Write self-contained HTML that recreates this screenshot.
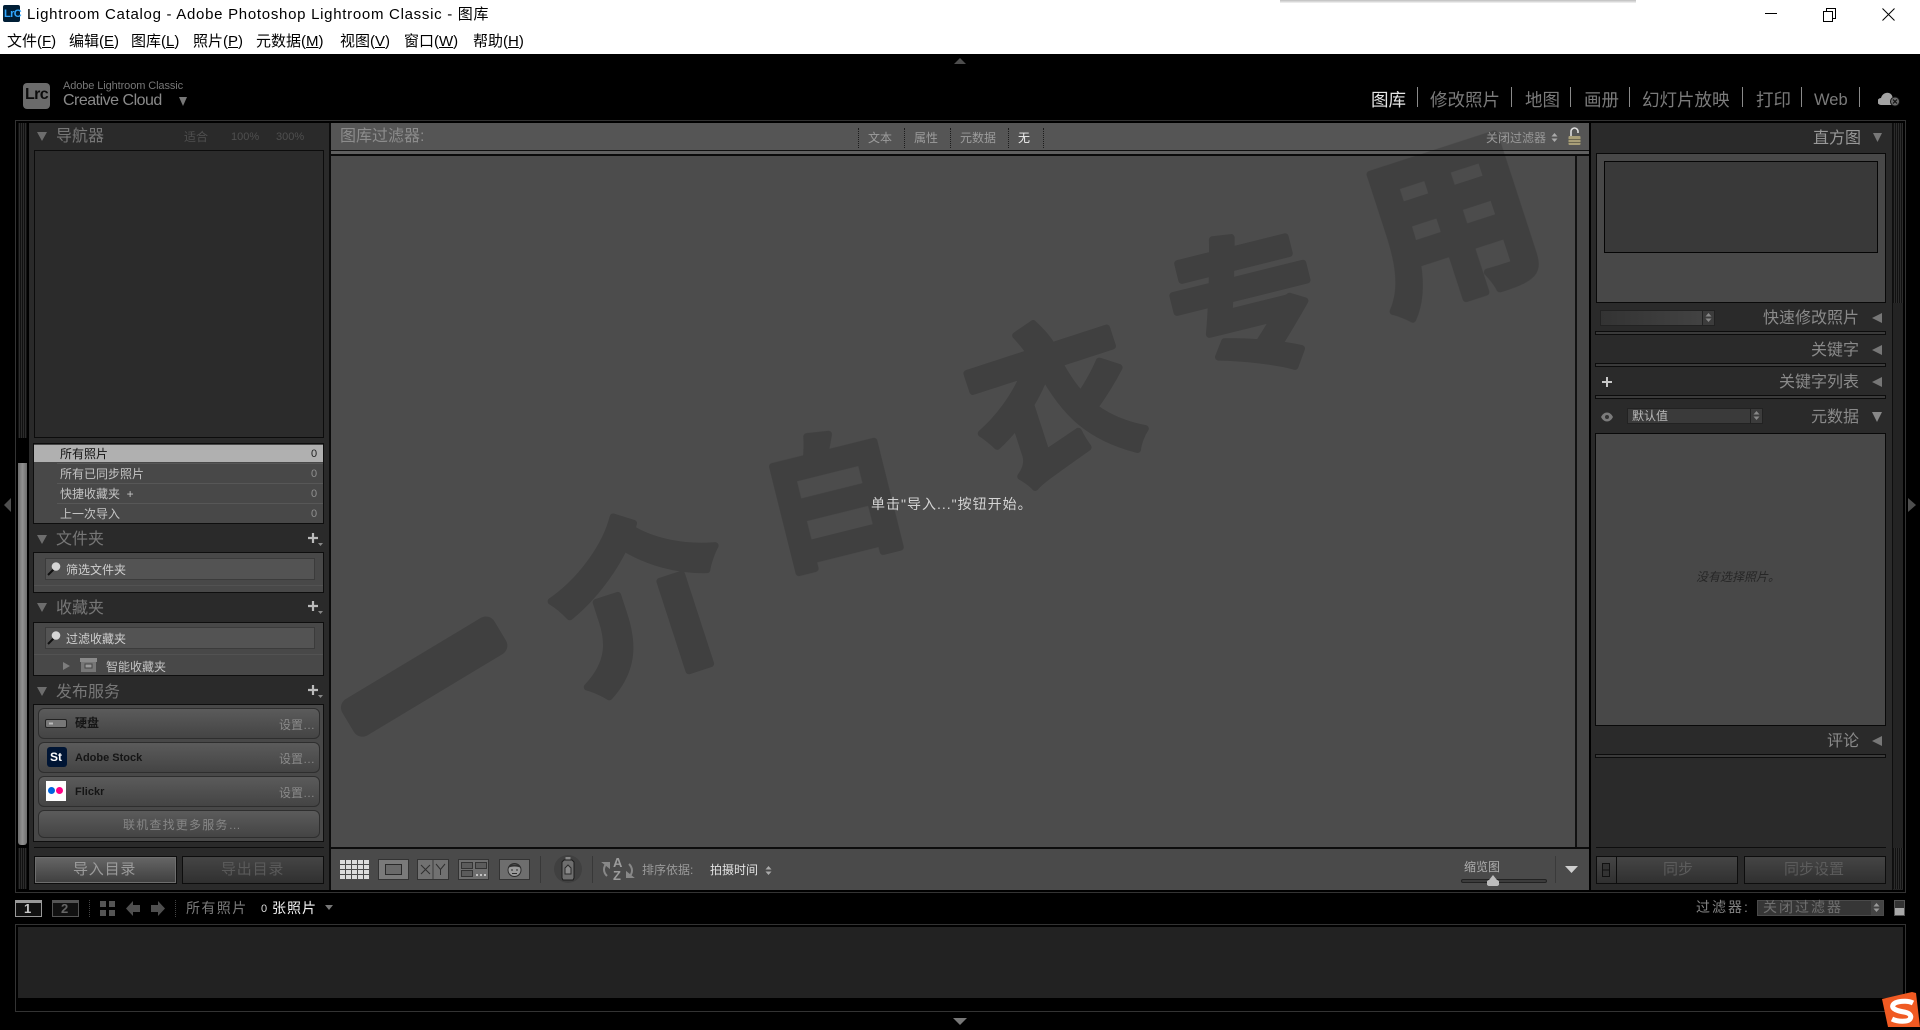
<!DOCTYPE html>
<html lang="zh-CN">
<head>
<meta charset="utf-8">
<title>Lightroom Catalog - Adobe Photoshop Lightroom Classic - 图库</title>
<style>
html,body{margin:0;padding:0;background:#000;}
#r{position:relative;width:1920px;height:1030px;overflow:hidden;background:#000;font-family:"Liberation Sans","Noto Sans CJK SC",sans-serif;}
#r div,#r span.t,#r svg{position:absolute;}
.t{position:absolute;white-space:nowrap;line-height:20px;height:20px;font-size:12px;}
.w{color:#000;font-size:15px;}
.h{font-size:16px;color:#777;}
.nav{font-size:17.5px;color:#7b7b7b;top:90px;}
.sep{width:1px;height:20px;top:87px;background:#8a8a8a;}
.box{background:#484848;border:1px solid #0e0e0e;box-sizing:border-box;}
.sf{background:#535353;border:1px solid #3b3b3b;box-sizing:border-box;}
.pb{left:38px;width:282px;box-sizing:border-box;border:1px solid #2e2e2e;border-radius:6px;background:linear-gradient(#5b5b5b,#444);}
.rs{left:1595px;width:291px;height:4px;box-sizing:border-box;border:1px solid #0c0c0c;background:#3a3a3a;}
.btn{box-sizing:border-box;border:1px solid #0d0d0d;height:28px;top:856px;}
.grip{background:repeating-linear-gradient(90deg,#111 0 1px,#2c2c2c 1px 2px);}
.rowl{left:57px;width:266px;height:1px;background:#575757;}
.c0{left:308px;width:12px;text-align:center;color:#8f8f8f;font-size:11px;}
.dot{width:1px;border-left:1px dotted #1c1c1c;}
</style>
</head>
<body>
<div id="r">
<!-- title bar -->
<div style="left:0;top:0;width:1920px;height:54px;background:#fff"></div>
<div style="left:1280px;top:0;width:356px;height:3px;background:linear-gradient(#bdbdbd,#f4f4f4)"></div>
<div style="left:3px;top:5px;width:17px;height:17px;background:#001e36;border-radius:2px"></div>
<span class="t" style="left:4px;top:4px;color:#31a8ff;font-size:11px;font-weight:700;letter-spacing:-.6px">LrC</span>
<span class="t w" style="left:27px;top:5px;font-size:15px;letter-spacing:.71px">Lightroom Catalog - Adobe Photoshop Lightroom Classic - 图库</span>
<span class="t w" style="left:7px;top:32px;font-size:15px">文件(<u>F</u>)</span>
<span class="t w" style="left:69px;top:32px;font-size:15px">编辑(<u>E</u>)</span>
<span class="t w" style="left:131px;top:32px;font-size:15px">图库(<u>L</u>)</span>
<span class="t w" style="left:193px;top:32px;font-size:15px">照片(<u>P</u>)</span>
<span class="t w" style="left:256px;top:32px;font-size:15px">元数据(<u>M</u>)</span>
<span class="t w" style="left:340px;top:32px;font-size:15px">视图(<u>V</u>)</span>
<span class="t w" style="left:404px;top:32px;font-size:15px">窗口(<u>W</u>)</span>
<span class="t w" style="left:473px;top:32px;font-size:15px">帮助(<u>H</u>)</span>
<svg style="left:1760px;top:4px" width="140" height="20" viewBox="0 0 140 20" fill="none" stroke="#000" stroke-width="1">
<path d="M5 9.5H17"/><path d="M63.5 7.5h9v10h-9zM66.5 7.5v-3h9v10h-3"/><path d="M122.5 4.5l12 12M134.5 4.5l-12 12"/>
</svg>

<!-- top & bottom collapse arrows -->
<svg style="left:953px;top:57px" width="14" height="8"><path d="M1 7L7 1l6 6z" fill="#4d4d4d"/></svg>
<svg style="left:952px;top:1017px" width="16" height="9"><path d="M1 1h14L8 8z" fill="#777"/></svg>
<svg style="left:4px;top:498px" width="8" height="14"><path d="M7 0v14L0 7z" fill="#4e4e4e"/></svg>
<svg style="left:1908px;top:498px" width="8" height="14"><path d="M0 0v14l8-7z" fill="#4e4e4e"/></svg>

<!-- identity plate -->
<div style="left:23px;top:83px;width:27px;height:26px;background:#6b6b6b;border-radius:4px"></div>
<span class="t" style="left:25px;top:85px;font-size:16px;font-weight:700;color:#0c0c0c;letter-spacing:-.6px">Lrc</span>
<span class="t" style="left:63px;top:76px;font-size:11px;color:#777;letter-spacing:-.1px">Adobe Lightroom Classic</span>
<span class="t" style="left:63px;top:91px;font-size:16px;color:#8a8a8a;letter-spacing:-.5px">Creative Cloud</span>
<svg style="left:179px;top:97px" width="9" height="10"><path d="M0 0h8L4 9z" fill="#777"/></svg>

<!-- module picker -->
<span class="t nav" style="left:1371px;color:#e6e6e6">图库</span><div class="sep" style="left:1417px"></div>
<span class="t nav" style="left:1430px">修改照片</span><div class="sep" style="left:1511px"></div>
<span class="t nav" style="left:1525px">地图</span><div class="sep" style="left:1570px"></div>
<span class="t nav" style="left:1584px">画册</span><div class="sep" style="left:1629px"></div>
<span class="t nav" style="left:1642px">幻灯片放映</span><div class="sep" style="left:1742px"></div>
<span class="t nav" style="left:1756px">打印</span><div class="sep" style="left:1801px"></div>
<span class="t nav" style="left:1814px;font-size:16.5px">Web</span><div class="sep" style="left:1859px"></div>
<svg style="left:1878px;top:90px" width="24" height="17" viewBox="0 0 24 17">
<path d="M3 15a3.5 3.5 0 0 1 0-7c1-4 5-6 8-5 2 .7 3 2 3.500 4 3 0 5 2 5 4l-3 4z" fill="#a3a3a3"/>
<circle cx="17" cy="11.500" r="4.500" fill="#6b6b6b" stroke="#111"/><path d="M15 9.500l4 4M19 9.500l-4 4" stroke="#111" stroke-width="1.200"/>
</svg>

<!-- main frame -->
<div style="left:15px;top:120px;width:1891px;height:773px;box-sizing:border-box;border:1px solid #333"></div>

<!-- left panel -->
<div style="left:29px;top:123px;width:300px;height:767px;background:#2a2a2a"></div>
<div style="left:18px;top:123px;width:9px;height:315px" class="grip"></div>
<div style="left:18px;top:463px;width:9px;height:382px;background:linear-gradient(90deg,#6e6e6e,#929292 50%,#6e6e6e);border-radius:0 0 3px 3px"></div>
<div style="left:18px;top:848px;width:9px;height:41px" class="grip"></div>
<div style="left:329px;top:123px;width:2px;height:767px;background:#0c0c0c"></div>

<!-- center panel -->
<div style="left:331px;top:123px;width:1258px;height:27px;background:#555"></div>
<div style="left:331px;top:150px;width:1258px;height:1px;background:#111"></div>
<div style="left:331px;top:151px;width:1258px;height:3px;background:#606060"></div>
<div style="left:331px;top:154px;width:1258px;height:2px;background:#0b0b0b"></div>
<div style="left:331px;top:156px;width:1244px;height:691px;background:#4c4c4c"></div>
<div style="left:1575px;top:156px;width:2px;height:691px;background:#111"></div>
<div style="left:1577px;top:156px;width:12px;height:691px;background:#464646"></div>
<div style="left:331px;top:847px;width:1258px;height:2px;background:#0c0c0c"></div>
<div style="left:331px;top:849px;width:1258px;height:41px;background:#4a4a4a"></div>

<!-- watermark -->
<svg style="left:0;top:0" width="1920" height="1030" viewBox="0 0 1920 1030" font-family="'Noto Sans CJK SC',sans-serif" font-weight="700" text-anchor="middle" dominant-baseline="central">
<defs><clipPath id="cp"><rect x="331" y="123" width="1244" height="724"/></clipPath></defs>
<g clip-path="url(#cp)" opacity=".16" fill="#000" stroke="#000" stroke-width="7" stroke-linejoin="round">
<text x="420" y="670" font-size="170" transform="rotate(-31 420 670)" stroke-width="20">一</text>
<text x="638" y="590" font-size="178" transform="rotate(-18 638 590)">介</text>
<text x="832" y="490" font-size="138" transform="rotate(-14 832 490)">白</text>
<text x="1050" y="392" font-size="165" transform="rotate(-18 1050 392)">衣</text>
<text x="1243" y="298" font-size="150" transform="rotate(-14 1243 298)">专</text>
<text x="1447" y="212" font-size="172" transform="rotate(-18 1447 212)">用</text>
</g>
</svg>

<!-- navigator -->
<svg style="left:37px;top:132px" width="11" height="10"><path d="M0 0h10L5 9z" fill="#6d6d6d"/></svg>
<span class="t h" style="left:56px;top:127px">导航器</span>
<span class="t" style="left:184px;top:127px;color:#4f4f4f">适合</span>
<span class="t" style="left:231px;top:127px;color:#4f4f4f;font-size:11px">100%</span>
<span class="t" style="left:276px;top:127px;color:#4f4f4f;font-size:11px">300%</span>
<div style="left:34px;top:150px;width:290px;height:288px;box-sizing:border-box;border:1px solid #0c0c0c;background:#2b2b2b"></div>

<!-- catalog -->
<div class="box" style="left:33px;top:443px;width:291px;height:81px"></div>
<div style="left:34px;top:445px;width:289px;height:17px;background:#b0b0b0"></div>
<div class="rowl" style="top:463px"></div><div class="rowl" style="top:483px"></div><div class="rowl" style="top:503px"></div>
<span class="t" style="left:60px;top:444px;color:#111">所有照片</span><span class="t c0" style="top:444px;color:#222">0</span>
<span class="t" style="left:60px;top:464px;color:#c4c4c4">所有已同步照片</span><span class="t c0" style="top:464px">0</span>
<span class="t" style="left:60px;top:484px;color:#c4c4c4">快捷收藏夹 &nbsp;+</span><span class="t c0" style="top:484px">0</span>
<span class="t" style="left:60px;top:504px;color:#c4c4c4">上一次导入</span><span class="t c0" style="top:504px">0</span>

<!-- folders -->
<svg style="left:37px;top:535px" width="11" height="10"><path d="M0 0h10L5 9z" fill="#6d6d6d"/></svg>
<span class="t h" style="left:56px;top:530px">文件夹</span>
<svg style="left:306px;top:532px" width="18" height="16"><path d="M7 1v10M2 6h10" stroke="#bbb" stroke-width="2.200"/><path d="M12 11h5l-2.500 3z" fill="#888"/></svg>
<div class="box" style="left:33px;top:552px;width:291px;height:41px"></div>
<div class="sf" style="left:45px;top:558px;width:270px;height:22px"></div>
<div style="left:34px;top:585px;width:289px;height:1px;background:#525252"></div>
<svg style="left:46px;top:561px" width="18" height="16"><path d="M2 14l6-6" stroke="#111" stroke-width="2"/><circle cx="10" cy="5.500" r="4.300" fill="#d6d6d6"/></svg>
<span class="t" style="left:66px;top:560px;color:#cfcfcf">筛选文件夹</span>

<!-- collections -->
<svg style="left:37px;top:603px" width="11" height="10"><path d="M0 0h10L5 9z" fill="#6d6d6d"/></svg>
<span class="t h" style="left:56px;top:599px">收藏夹</span>
<svg style="left:306px;top:600px" width="18" height="16"><path d="M7 1v10M2 6h10" stroke="#bbb" stroke-width="2.200"/><path d="M12 11h5l-2.500 3z" fill="#888"/></svg>
<div class="box" style="left:33px;top:622px;width:291px;height:54px"></div>
<div class="sf" style="left:45px;top:627px;width:270px;height:22px"></div>
<div style="left:34px;top:654px;width:289px;height:1px;background:#525252"></div>
<svg style="left:46px;top:630px" width="18" height="16"><path d="M2 14l6-6" stroke="#111" stroke-width="2"/><circle cx="10" cy="5.500" r="4.300" fill="#d6d6d6"/></svg>
<span class="t" style="left:66px;top:629px;color:#cfcfcf">过滤收藏夹</span>
<svg style="left:62px;top:661px" width="9" height="10"><path d="M1 1v8l7-4z" fill="#7d7d7d"/></svg>
<svg style="left:80px;top:658px" width="17" height="14"><rect x="0" y="0" width="17" height="4" fill="#8a8a8a"/><rect x="1" y="4" width="15" height="10" fill="#777"/><rect x="5" y="6" width="7" height="4" fill="#9a9a9a" stroke="#444"/></svg>
<span class="t" style="left:106px;top:657px;color:#c4c4c4">智能收藏夹</span>

<!-- publish services -->
<svg style="left:37px;top:687px" width="11" height="10"><path d="M0 0h10L5 9z" fill="#6d6d6d"/></svg>
<span class="t h" style="left:56px;top:683px">发布服务</span>
<svg style="left:306px;top:684px" width="18" height="16"><path d="M7 1v10M2 6h10" stroke="#bbb" stroke-width="2.200"/><path d="M12 11h5l-2.500 3z" fill="#888"/></svg>
<div class="box" style="left:33px;top:704px;width:291px;height:138px"></div>
<div class="pb" style="top:708px;height:31px"></div>
<div class="pb" style="top:742px;height:31px"></div>
<div class="pb" style="top:776px;height:31px"></div>
<div class="pb" style="top:810px;height:28px"></div>
<svg style="left:45px;top:719px" width="22" height="10"><rect x=".5" y=".5" width="21" height="8" rx="1.500" fill="#777" stroke="#222"/><rect x="4" y="3.500" width="4" height="2" fill="#bbb"/></svg>
<span class="t" style="left:75px;top:713px;color:#151515;font-weight:700">硬盘</span>
<span class="t" style="left:279px;top:715px;color:#8a8a8a">设置…</span>
<div style="left:47px;top:747px;width:20px;height:20px;background:#001534;border-radius:3px"></div>
<span class="t" style="left:50px;top:747px;color:#fff;font-weight:700;font-size:12px">St</span>
<span class="t" style="left:75px;top:748px;color:#151515;font-size:11px;font-weight:700">Adobe Stock</span>
<span class="t" style="left:279px;top:749px;color:#8a8a8a">设置…</span>
<div style="left:46px;top:781px;width:20px;height:20px;background:#fff"></div>
<div style="left:48px;top:787px;width:7px;height:7px;border-radius:50%;background:#0063dc"></div>
<div style="left:56px;top:787px;width:7px;height:7px;border-radius:50%;background:#ff0084"></div>
<span class="t" style="left:75px;top:782px;color:#151515;font-size:11px;font-weight:700">Flickr</span>
<span class="t" style="left:279px;top:783px;color:#8a8a8a">设置…</span>
<span class="t" style="left:123px;top:815px;color:#868686;letter-spacing:1.200px">联机查找更多服务…</span>

<!-- left bottom buttons -->
<div style="left:34px;top:847px;width:290px;height:1px;background:#0d0d0d"></div>
<div class="btn" style="left:34px;width:143px;background:linear-gradient(#666,#3f3f3f);box-shadow:inset 0 0 0 1px #6e6e6e"></div>
<span class="t" style="left:73px;top:860px;font-size:15px;color:#9b9b9b;letter-spacing:.8px">导入目录</span>
<div class="btn" style="left:182px;width:142px;background:linear-gradient(#454545,#303030)"></div>
<span class="t" style="left:221px;top:860px;font-size:15px;color:#5a5a5a;letter-spacing:.8px">导出目录</span>

<!-- filter bar -->
<span class="t h" style="left:340px;top:127px;color:#8c8c8c">图库过滤器:</span>
<div class="dot" style="left:858px;top:128px;height:20px"></div>
<div class="dot" style="left:904px;top:128px;height:20px"></div>
<div class="dot" style="left:950px;top:128px;height:20px"></div>
<div class="dot" style="left:1008px;top:128px;height:20px"></div>
<div class="dot" style="left:1043px;top:128px;height:20px"></div>
<span class="t" style="left:868px;top:128px;color:#9c9c9c">文本</span>
<span class="t" style="left:914px;top:128px;color:#9c9c9c">属性</span>
<span class="t" style="left:960px;top:128px;color:#9c9c9c">元数据</span>
<span class="t" style="left:1018px;top:128px;color:#f0f0f0">无</span>
<span class="t" style="left:1486px;top:128px;color:#999">关闭过滤器</span>
<svg style="left:1551px;top:132px" width="7" height="11"><path d="M.5 4.500h6L3.500 1zM.5 6.500h6L3.500 10z" fill="#aaa"/></svg>
<svg style="left:1567px;top:127px" width="15" height="20"><path d="M4 9V4.500a3.500 3.500 0 0 1 7 0V6" fill="none" stroke="#ddd" stroke-width="1.600"/><rect x="1.500" y="9" width="12" height="9" rx="1" fill="#a89e78"/><rect x="1.500" y="12" width="12" height="1" fill="#6c6650"/><rect x="1.500" y="15" width="12" height="1" fill="#6c6650"/></svg>

<!-- message -->
<span class="t" style="left:871px;top:494px;font-size:14px;color:#d4d4d4;letter-spacing:1px">单击"导入..."按钮开始。</span>

<!-- toolbar -->
<svg style="left:340px;top:860px" width="30" height="20">
<defs><pattern id="g" width="6" height="5" patternUnits="userSpaceOnUse"><rect width="5" height="4" fill="#dcdcdc"/></pattern></defs>
<rect width="30" height="20" fill="url(#g)"/></svg>
<svg style="left:378px;top:859px" width="32" height="21"><rect x=".5" y=".5" width="30" height="20" fill="#7a7a7a" stroke="#333"/><rect x="7.500" y="5.500" width="16" height="10" fill="#6a6a6a" stroke="#2a2a2a"/></svg>
<svg style="left:417px;top:859px" width="33" height="21"><rect x=".5" y=".5" width="31" height="20" fill="#717171" stroke="#333"/><path d="M16 1v19" stroke="#3c3c3c"/><path d="M4 6l9 9M13 6l-9 9M19 5l4.500 5.500L28 5M23.500 10.500V16" stroke="#2f2f2f" fill="none"/></svg>
<svg style="left:458px;top:859px" width="32" height="21"><rect x=".5" y=".5" width="30" height="20" fill="#6e6e6e" stroke="#333"/><rect x="3.500" y="3.500" width="11" height="6" fill="#5b5b5b" stroke="#333"/><rect x="17.500" y="3.500" width="11" height="6" fill="#5b5b5b" stroke="#333"/><rect x="3.500" y="11.500" width="11" height="6" fill="#5b5b5b" stroke="#333"/><path d="M18 16h2M22 16h2M26 16h2" stroke="#ddd" stroke-width="1.500"/></svg>
<svg style="left:499px;top:859px" width="32" height="21"><rect x=".5" y=".5" width="30" height="20" fill="#6e6e6e" stroke="#333"/><circle cx="15.500" cy="11" r="6.500" fill="#9a9a9a" stroke="#2c2c2c"/><path d="M9 9c1-5 12-5 13 0-3-2-10-2-13 0z" fill="#2f2f2f"/><path d="M12 11h2M17 11h2M13 14.500h5" stroke="#2c2c2c"/></svg>
<div style="left:540px;top:856px;width:1px;height:27px;background:#383838"></div>
<svg style="left:553px;top:855px" width="30" height="28"><circle cx="15" cy="14" r="14" fill="#404040"/><rect x="12.500" y="2" width="5" height="3" fill="#888"/><path d="M9 7l2-2h8l2 2v16l-1 2H10l-1-2z" fill="#6e6e6e" stroke="#1d1d1d"/><path d="M15 10l3 3v6h-6v-6z" fill="#8a8a8a" stroke="#2a2a2a"/></svg>
<div style="left:592px;top:856px;width:1px;height:27px;background:#383838"></div>
<span class="t" style="left:613px;top:856px;font-size:13px;font-weight:700;color:#9c9c9c;line-height:13px">A</span>
<span class="t" style="left:613px;top:869px;font-size:13px;font-weight:700;color:#9c9c9c;line-height:13px">Z</span>
<svg style="left:601px;top:860px" width="34" height="20" fill="none" stroke="#888" stroke-width="2"><path d="M6 16C2 12 2 7 6 3"/><path d="M28 4c4 4 4 9 0 13"/><path d="M3 3h5v4z" fill="#888"/><path d="M31 17h-5v-4z" fill="#888"/></svg>
<span class="t" style="left:642px;top:860px;color:#9a9a9a;font-size:12px">排序依据:</span>
<span class="t" style="left:710px;top:860px;color:#e2e2e2">拍摄时间</span>
<svg style="left:765px;top:865px" width="7" height="11"><path d="M.5 4.500h6L3.500 1zM.5 6.500h6L3.500 10z" fill="#aaa"/></svg>
<span class="t" style="left:1464px;top:857px;color:#adadad">缩览图</span>
<div style="left:1461px;top:879px;width:86px;height:4px;border-radius:2px;background:#3c3c3c;border:1px solid #222;box-sizing:border-box"></div>
<svg style="left:1487px;top:875px" width="12" height="11"><path d="M6 0l4 5a3 3 0 0 1-1 6H3a3 3 0 0 1-1-6z" fill="#bcbcbc"/></svg>
<div style="left:1555px;top:856px;width:1px;height:27px;background:#3a3a3a"></div>
<svg style="left:1565px;top:866px" width="13" height="8"><path d="M0 0h13L6.500 7z" fill="#cfcfcf"/></svg>

<!-- right panel -->
<div style="left:1591px;top:123px;width:301px;height:767px;background:#2a2a2a"></div>
<div style="left:1892px;top:123px;width:1px;height:767px;background:#0e0e0e"></div>
<div style="left:1893px;top:123px;width:10px;height:767px;background:#232323"></div>
<div class="grip" style="left:1893px;top:123px;width:10px;height:180px"></div>
<div class="grip" style="left:1893px;top:848px;width:10px;height:41px"></div>
<span class="t h" style="right:59px;top:129px;font-size:16px;color:#999">直方图</span>
<svg style="left:1873px;top:133px" width="10" height="10"><path d="M0 0h9L4.500 9z" fill="#777"/></svg>
<div class="box" style="left:1596px;top:153px;width:290px;height:150px;border-color:#090909"></div>
<div style="left:1604px;top:161px;width:274px;height:92px;box-sizing:border-box;border:1px solid #050505;background:#393939"></div>

<div style="left:1600px;top:310px;width:115px;height:16px;background:linear-gradient(90deg,#333,#444);border:1px solid #222;box-sizing:border-box"></div>
<div style="left:1702px;top:310px;width:13px;height:16px;background:#3c3c3c;border:1px solid #222;box-sizing:border-box"></div>
<svg style="left:1705px;top:312px" width="7" height="11"><path d="M.5 4.500h6L3.500 1zM.5 6.500h6L3.500 10z" fill="#888"/></svg>
<span class="t h" style="right:61px;top:309px;color:#8a8a8a">快速修改照片</span>
<svg style="left:1872px;top:313px" width="11" height="10"><path d="M10 0v10L0 5z" fill="#777"/></svg>
<div class="rs" style="top:331px"></div>
<span class="t h" style="right:61px;top:341px;color:#8a8a8a">关键字</span>
<svg style="left:1872px;top:345px" width="11" height="10"><path d="M10 0v10L0 5z" fill="#777"/></svg>
<div class="rs" style="top:363px"></div>
<svg style="left:1602px;top:377px" width="10" height="10"><path d="M5 0v10M0 5h10" stroke="#c8c8c8" stroke-width="2"/></svg>
<span class="t h" style="right:61px;top:373px;color:#8a8a8a">关键字列表</span>
<svg style="left:1872px;top:377px" width="11" height="10"><path d="M10 0v10L0 5z" fill="#777"/></svg>
<div class="rs" style="top:395px"></div>
<svg style="left:1600px;top:411px" width="14" height="12"><path d="M1 6c3-6 9-6 12 0-3 6-9 6-12 0z" fill="#7b7b7b"/><circle cx="7" cy="6" r="2" fill="#333"/></svg>
<div style="left:1627px;top:408px;width:136px;height:16px;background:#3a3a3a;border:1px solid #222;box-sizing:border-box"></div>
<div style="left:1750px;top:408px;width:13px;height:16px;background:#3c3c3c;border:1px solid #222;box-sizing:border-box"></div>
<svg style="left:1753px;top:410px" width="7" height="11"><path d="M.5 4.500h6L3.500 1zM.5 6.500h6L3.500 10z" fill="#888"/></svg>
<span class="t" style="left:1632px;top:406px;color:#bbb">默认值</span>
<span class="t h" style="right:61px;top:408px;color:#8a8a8a">元数据</span>
<svg style="left:1872px;top:412px" width="11" height="10"><path d="M0 0h10L5 10z" fill="#888"/></svg>
<div class="box" style="left:1595px;top:433px;width:291px;height:293px;border-color:#090909"></div>
<span class="t" style="left:1696px;top:567px;color:#262626;font-size:12px;font-style:italic">没有选择照片。</span>
<span class="t h" style="right:61px;top:732px;color:#8a8a8a">评论</span>
<svg style="left:1872px;top:736px" width="11" height="10"><path d="M10 0v10L0 5z" fill="#777"/></svg>
<div class="rs" style="top:754px"></div>
<div style="left:1596px;top:847px;width:290px;height:1px;background:#0d0d0d"></div>
<div class="btn" style="left:1596px;width:142px;background:linear-gradient(#454545,#303030)"></div>
<div style="left:1616px;top:856px;width:1px;height:28px;background:#0d0d0d"></div>
<div style="left:1602px;top:863px;width:8px;height:14px;border:1px solid #111;box-sizing:border-box;background:linear-gradient(#333 45%,#111 45% 55%,#333 55%)"></div>
<span class="t" style="left:1663px;top:860px;font-size:15px;color:#5c5c5c">同步</span>
<div class="btn" style="left:1744px;width:142px;background:linear-gradient(#454545,#303030)"></div>
<span class="t" style="left:1784px;top:860px;font-size:15px;color:#5c5c5c">同步设置</span>

<!-- filmstrip bar -->
<div style="left:15px;top:900px;width:27px;height:17px;box-sizing:border-box;border:1px solid #999;border-top:3px solid #999;background:#111"></div>
<span class="t" style="left:24px;top:899px;color:#c8c8c8;font-size:13px;font-weight:700">1</span>
<div style="left:52px;top:900px;width:27px;height:17px;box-sizing:border-box;border:1px solid #555;border-top:3px solid #555;background:#111"></div>
<span class="t" style="left:61px;top:899px;color:#666;font-size:13px;font-weight:700">2</span>
<div class="dot" style="left:89px;top:900px;height:17px;border-left-color:#444"></div>
<svg style="left:100px;top:901px" width="15" height="15"><path d="M0 0h6v6H0zM9 0h6v6H9zM0 9h6v6H0zM9 9h6v6H9z" fill="#555"/></svg>
<svg style="left:126px;top:901px" width="14" height="15"><path d="M0 7.500L7 0v4h7v7H7v4z" fill="#4f4f4f"/></svg>
<svg style="left:151px;top:901px" width="14" height="15"><path d="M14 7.500L7 0v4H0v7h7v4z" fill="#4f4f4f"/></svg>
<div class="dot" style="left:175px;top:900px;height:17px;border-left-color:#444"></div>
<span class="t" style="left:186px;top:898px;font-size:14px;color:#7b7b7b;letter-spacing:1.400px">所有照片</span>
<span class="t" style="left:261px;top:899px;font-size:11px;color:#ddd">0</span>
<span class="t" style="left:272px;top:898px;font-size:14px;color:#f4f4f4;letter-spacing:1px">张照片</span>
<svg style="left:325px;top:905px" width="9" height="6"><path d="M0 0h8L4 5z" fill="#777"/></svg>
<span class="t" style="left:1696px;top:897px;font-size:14px;color:#858585;letter-spacing:2px">过滤器:</span>
<div style="left:1757px;top:900px;width:127px;height:16px;box-sizing:border-box;border:1px solid #4a4a4a;background:#363636"></div>
<span class="t" style="left:1763px;top:897px;font-size:14px;color:#6f6f6f;letter-spacing:2px">关闭过滤器</span>
<div style="left:1871px;top:901px;width:12px;height:14px;background:#444"></div>
<svg style="left:1873px;top:902px" width="7" height="11"><path d="M.5 4.500h6L3.500 1zM.5 6.500h6L3.500 10z" fill="#999"/></svg>
<div style="left:1894px;top:900px;width:11px;height:16px;box-sizing:border-box;border:1px solid #555;background:linear-gradient(#333 50%,#a8a8a8 50%)"></div>

<!-- filmstrip -->
<div style="left:15px;top:924px;width:1891px;height:88px;box-sizing:border-box;border:1px solid #333"></div>
<div style="left:18px;top:927px;width:1885px;height:71px;background:#222"></div>

<!-- Sogou IME badge -->
<svg style="left:1880px;top:990px" width="40" height="40" viewBox="0 0 40 40">
<path d="M2 9l30-7 4 1 4 34H8z" fill="#f05a22"/>
<path d="M33 13c-6-3-18-2-20 2s5 6 11 7 8 4 6 7-12 3-18 0" fill="none" stroke="#fff" stroke-width="5"/>
</svg>
</div>
</body>
</html>
